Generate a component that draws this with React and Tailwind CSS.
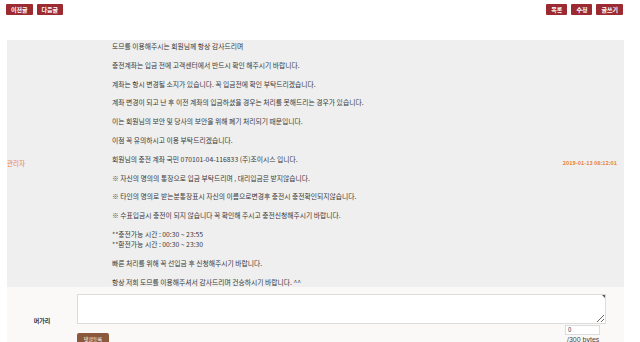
import { useState } from 'react'

const FONT = { fontFamily: '"Noto Sans CJK KR", "Noto Sans", sans-serif' }

const LINES = [
  '도므를 이용해주시는 회원님께 항상 감사드리며',
  '충전계좌는 입금 전에 고객센터에서 반드시 확인 해주시기 바랍니다.',
  '계좌는 항시 변경될 소지가 있습니다. 꼭 입금전에 확인 부탁드리겠습니다.',
  '계좌 변경이 되고 난 후 이전 계좌의 입금하셨을 경우는 처리를 못해드리는 경우가 있습니다.',
  '이는 회원님의 보안 및 당사의 보안을 위해 폐기 처리되기 때문입니다.',
  '이점 꼭 유의하시고 이용 부탁드리겠습니다.',
  '회원님의 충전 계좌 국민 070101-04-116833 (주)조이시스 입니다.',
]

const NOTES = [
  '자신의 명의의 통장으로 입금 부탁드리며 , 대리입금은 받지않습니다.',
  '타인의 명의로 받는분통장표시 자신의 이름으로변경후 충전시 충전확인되지않습니다.',
  '수표입금시 충전이 되지 않습니다 꼭 확인해 주시고 충전신청해주시기 바랍니다.',
]

function RedButton({ children }) {
  return (
    <button className="h-[11px] rounded-[1px] bg-[#9c2a31] px-[5px] text-[6px] leading-[11px] font-bold text-white">
      {children}
    </button>
  )
}

export default function App() {
  const [memo, setMemo] = useState('')

  return (
    <div className="h-[342px] w-[640px] overflow-hidden bg-white text-[#383838]" style={FONT}>
      {/* top nav buttons */}
      <div className="flex justify-between pl-[6px] pr-[17px] pt-[4px]">
        <div className="flex gap-[4px]">
          <RedButton>이전글</RedButton>
          <RedButton>다음글</RedButton>
        </div>
        <div className="flex gap-[4px]">
          <RedButton>목록</RedButton>
          <RedButton>수정</RedButton>
          <RedButton>글쓰기</RedButton>
        </div>
      </div>

      {/* post body */}
      <div className="ml-[7px] mt-[25px] flex h-[247px] w-[617px] bg-[#efefef]">
        <div className="flex w-[105px] items-center text-[6.5px] text-[#e8843f]">관리자</div>
        <div className="flex flex-1 flex-col gap-[8.8px] pt-[1px] text-[6.8px] leading-[10px]">
          {LINES.map((l) => (
            <p key={l} className="h-[10px]">{l}</p>
          ))}
          {NOTES.map((l) => (
            <p key={l} className="h-[10px]">
              <span
                className="text-[#555]"
                style={{ fontFamily: '"Noto Sans CJK JP", "Noto Sans CJK KR", sans-serif' }}
              >
                {'\u203B\uFE0E'}
              </span>{' '}
              {l}
            </p>
          ))}
          <p className="h-[20px]">
            **충전가능 시간 : 00:30 ~ 23:55
            <br />
            **환전가능 시간 : 00:30 ~ 23:30
          </p>
          <p className="h-[10px]">빠른 처리를 위해 꼭 선입금 후 신청해주시기 바랍니다.</p>
          <p className="h-[10px]">항상 저희 도므를 이용해주셔서 감사드리며 건승하시기 바랍니다. ^^</p>
        </div>
        <div className="flex items-center pr-[7px] text-[5.5px] font-bold text-[#e8843f]">
          2019-01-13 08:12:01
        </div>
      </div>

      {/* comment form */}
      <div className="ml-[7px] flex h-[55px] w-[617px] bg-[#faf9f8] pt-[7px]">
        <div className="flex w-[70px] items-center justify-center pt-[4px] text-[6px] font-bold text-[#333]">
          머가리
        </div>
        <div className="flex w-[529px] flex-col">
          <div className="relative">
            <textarea
              value={memo}
              onChange={(e) => setMemo(e.target.value)}
              className="block h-[30px] w-[529px] resize border border-[#dcdcdc] bg-white outline-none"
            />
            <svg className="absolute right-[1px] top-[1px]" width="3" height="3" viewBox="0 0 3 3">
              <path d="M0 0H3V3Z" fill="#555" />
            </svg>
          </div>
          <div className="flex justify-between">
            <button className="mt-[9px] h-[12px] w-[32px] rounded-[2px] bg-[#8b5a3c] text-[5px] leading-[12px] text-white">
              댓글등록
            </button>
            <div className="mr-[6px] flex w-[35px] flex-col">
              <div className="mt-[1px] h-[10px] border border-[#dcdcdc] bg-white pl-[2px] text-[6px] leading-[8px] text-[#333]">
                {memo.length}
              </div>
              <div
                className="mt-[1px] pl-[2px] text-[7px] leading-[8px] text-[#444]"
                style={{ fontFamily: '"Liberation Sans", Arial, sans-serif' }}
              >
                /300 bytes
              </div>
            </div>
          </div>
        </div>
      </div>
    </div>
  )
}
